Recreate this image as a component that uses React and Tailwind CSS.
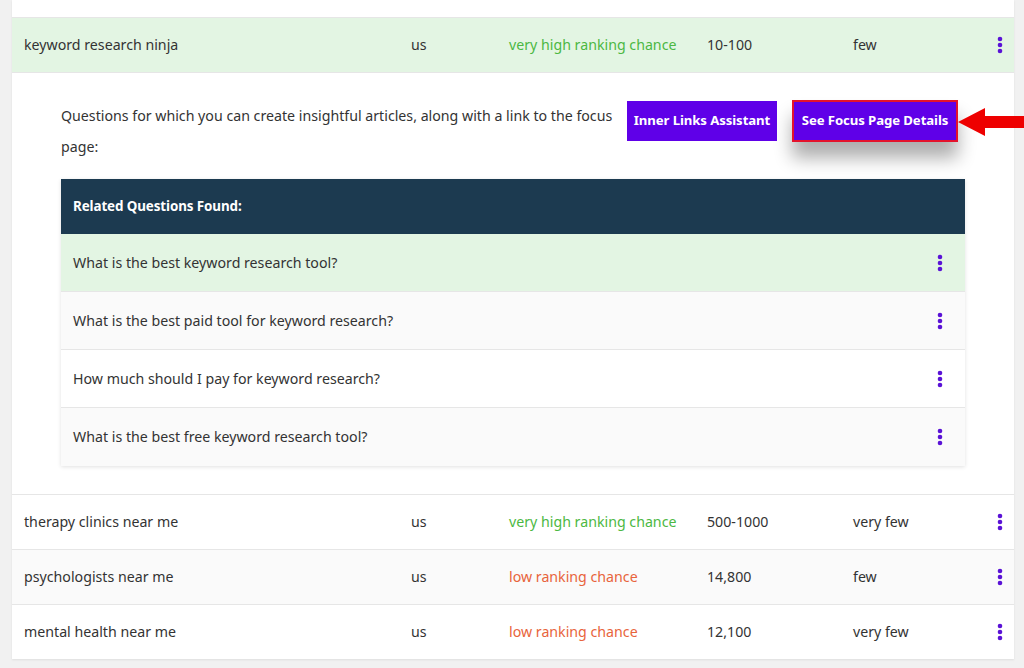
import React from "react";

const rows = [
  { kw: "therapy clinics near me", loc: "us", chance: "very high ranking chance", good: true, vol: "500-1000", comp: "very few", bg: "bg-white" },
  { kw: "psychologists near me", loc: "us", chance: "low ranking chance", good: false, vol: "14,800", comp: "few", bg: "bg-[#fafafa]" },
  { kw: "mental health near me", loc: "us", chance: "low ranking chance", good: false, vol: "12,100", comp: "very few", bg: "bg-white" },
];

const questions = [
  { q: "What is the best keyword research tool?", bg: "bg-[#e3f5e3]" },
  { q: "What is the best paid tool for keyword research?", bg: "bg-[#fafafa]" },
  { q: "How much should I pay for keyword research?", bg: "bg-white" },
  { q: "What is the best free keyword research tool?", bg: "bg-[#fafafa]" },
];

function Dots() {
  return (
    <svg width="6" height="18" viewBox="0 0 6 18" className="block">
      <circle cx="3" cy="3" r="2.3" fill="#5a12d6" />
      <circle cx="3" cy="9" r="2.3" fill="#5a12d6" />
      <circle cx="3" cy="15" r="2.3" fill="#5a12d6" />
    </svg>
  );
}

function KeywordRow({ row, className }) {
  return (
    <div className={`grid grid-cols-[387px_98px_198px_146px_1fr_auto] items-center pl-3 pr-[11px] text-[14.2px] text-[#333] ${className}`}>
      <span>{row.kw}</span>
      <span>{row.loc}</span>
      <span className={row.good ? "text-[#4cb843]" : "text-[#e8643c]"}>{row.chance}</span>
      <span>{row.vol}</span>
      <span>{row.comp}</span>
      <Dots />
    </div>
  );
}

export default function App() {
  return (
    <div className="w-[1024px] h-[668px] overflow-hidden bg-[#f1f1f1] font-['Noto_Sans',sans-serif]">
      <div className="ml-3 w-[1002px] bg-white shadow-[0_1px_2px_rgba(0,0,0,0.08)]">
        <div className="h-[18px] border-b border-[#e6e6e6]" />
        <KeywordRow
          className="h-[55px] bg-[#e3f5e3] border-b border-[#e6e6e6]"
          row={{ kw: "keyword research ninja", loc: "us", chance: "very high ranking chance", good: true, vol: "10-100", comp: "few" }}
        />

        <div className="relative px-[49px] pt-[27px] pb-[28px]">
          <div className="flex items-start pr-[7px]">
            <p className="flex-1 text-[14.2px] leading-[31px] text-[#333] pr-3">
              Questions for which you can create insightful articles, along with a link to the focus page:
            </p>
            <button className="mt-px h-10 w-[150px] bg-[#5f00e8] text-white text-[13.2px] font-bold tracking-[-0.1px]">
              Inner Links Assistant
            </button>
            <button className="ml-[15px] h-[42px] w-[166px] bg-[#5f00e8] text-white text-[13.2px] font-bold tracking-[-0.1px] border-2 border-[#e4132c] shadow-[0_16px_18px_rgba(0,0,0,0.32)]">
              See Focus Page Details
            </button>
          </div>

          <div className="mt-[17px] shadow-[0_1px_4px_rgba(0,0,0,0.12)]">
            <div className="h-[55px] flex items-center px-3 bg-[#1c3a50] text-white text-[13.4px] font-bold tracking-[-0.1px]">
              Related Questions Found:
            </div>
            {questions.map((item, i) => (
              <div
                key={i}
                className={`h-[58px] flex items-center justify-between pl-3 pr-[22px] text-[14.2px] text-[#333] ${item.bg} ${i < questions.length - 1 ? "border-b border-[#e6e6e6]" : ""}`}
              >
                <span>{item.q}</span>
                <Dots />
              </div>
            ))}
          </div>

          {/* red arrow pointing at the focus button */}
          <svg className="absolute left-[946px] top-[34px]" width="66" height="30" viewBox="0 0 66 30">
            <polygon points="0,15 27,1 27,9 66,9 66,21 27,21 27,29" fill="#ee0000" />
          </svg>
        </div>

        {rows.map((row, i) => (
          <KeywordRow key={i} row={row} className={`h-[55px] border-t border-[#e6e6e6] ${row.bg}`} />
        ))}
      </div>
    </div>
  );
}
